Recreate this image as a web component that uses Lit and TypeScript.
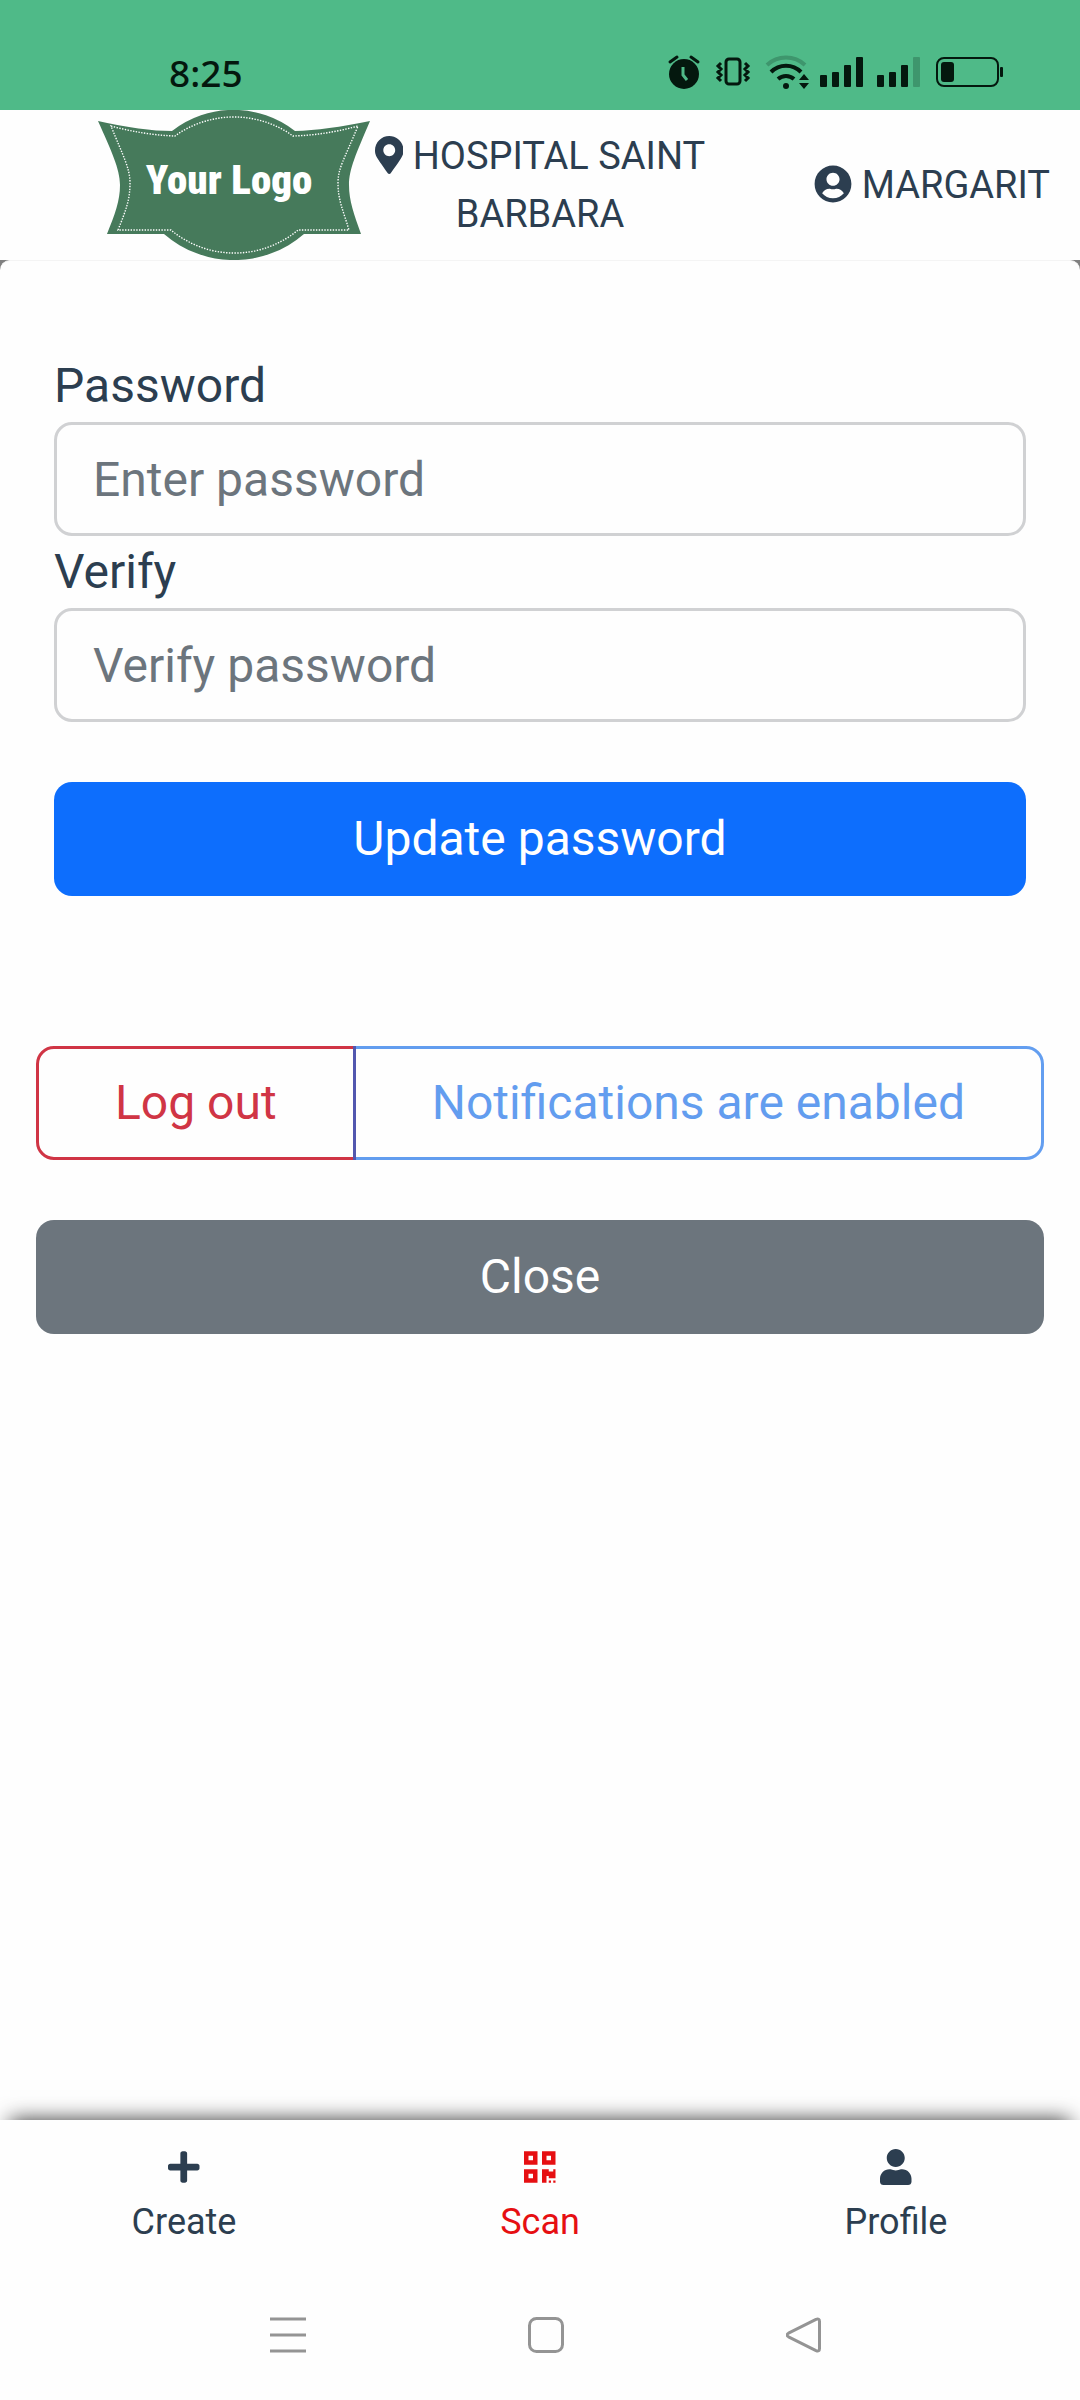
import { LitElement, html, css, svg } from "lit";
import { customElement, property } from "lit/decorators.js";

const ICONS = {
  pin: {
    width: 384,
    path: "M172.268 501.67C26.97 291.031 0 269.413 0 192 0 85.961 85.961 0 192 0s192 85.961 192 192c0 77.413-26.97 99.031-172.268 309.67-9.535 13.774-29.93 13.773-39.464 0zM192 272c44.183 0 80-35.817 80-80s-35.817-80-80-80-80 35.817-80 80 35.817 80 80 80z",
  },
  account: {
    width: 512,
    path: "M256 8C119 8 8 119 8 256s111 248 248 248 248-111 248-248S393 8 256 8zm0 96c48.6 0 88 39.4 88 88s-39.4 88-88 88-88-39.4-88-88 39.4-88 88-88zm0 344c-58.7 0-111.3-26.6-146.5-68.2 18.8-35.4 55.6-59.8 98.5-59.8 2.4 0 4.8.4 7.1 1.1 13 4.2 26.6 6.9 40.9 6.9 14.3 0 28-2.7 40.9-6.9 2.3-.7 4.7-1.1 7.1-1.1 42.9 0 79.7 24.4 98.5 59.8C367.3 421.4 314.7 448 256 448z",
  },
  plus: {
    width: 448,
    path: "M416 208H272V64c0-17.67-14.33-32-32-32h-32c-17.67 0-32 14.33-32 32v144H32c-17.67 0-32 14.33-32 32v32c0 17.67 14.33 32 32 32h144v144c0 17.67 14.33 32 32 32h32c17.67 0 32-14.33 32-32V304h144c17.67 0 32-14.33 32-32v-32c0-17.67-14.33-32-32-32z",
  },
  qrcode: {
    width: 448,
    path: "M0 224h192V32H0v192zM64 96h64v64H64V96zm192-64v192h192V32H256zm128 128h-64V96h64v64zM0 480h192V288H0v192zm64-128h64v64H64v-64zm352-64h32v128h-96v-32h-32v96h-64V288h96v32h64v-32zm0 160h32v32h-32v-32zm-64 0h32v32h-32v-32z",
  },
  user: {
    width: 448,
    path: "M224 256c70.7 0 128-57.3 128-128S294.7 0 224 0 96 57.3 96 128s57.3 128 128 128zm89.6 32h-16.7c-22.2 10.2-46.9 16-72.9 16s-50.6-5.8-72.9-16h-16.7C60.2 288 0 348.2 0 422.4V464c0 26.5 21.5 48 48 48h352c26.5 0 48-21.5 48-48v-41.6c0-74.2-60.2-134.4-134.4-134.4z",
  },
};

type IconName = keyof typeof ICONS;

/** Solid glyph, one em high, in the current text colour. */
@customElement("app-icon")
class AppIcon extends LitElement {
  @property() name: IconName = "plus";

  static styles = css`
    :host {
      display: inline-block;
      height: 1em;
      line-height: 1;
      vertical-align: -0.125em;
    }
    .glyph {
      display: block;
      height: 1em;
      fill: currentColor;
    }
  `;

  render() {
    const icon = ICONS[this.name];
    return html`<svg class="glyph" viewBox="0 0 ${icon.width} 512" aria-hidden="true">
      <path d=${icon.path}></path>
    </svg>`;
  }
}

/** Device status bar: clock, alarm, ringer, wireless, two SIMs, battery. */
@customElement("status-bar")
class StatusBar extends LitElement {
  static styles = css`
    :host {
      display: flex;
      align-items: center;
      justify-content: space-between;
      height: 110px;
      box-sizing: border-box;
      padding: 36px 77px 0 169px;
      background: #4fba88;
      color: #04180e;
    }
    .clock {
      font: 500 37px/40px "Noto Sans", Roboto, sans-serif;
    }
    .tray {
      display: flex;
      align-items: center;
      gap: 16px;
    }
    .tray svg {
      display: block;
      overflow: visible;
    }
  `;

  private bars(heights: number[], faded: number) {
    return heights.map(
      (h, i) =>
        svg`<rect x=${i * 12} y=${31 - h} width="7" height=${h} rx="1" fill="currentColor" opacity=${i >= faded ? 0.22 : 1}></rect>`
    );
  }

  render() {
    return html`
      <time class="clock">8:25</time>
      <div class="tray">
        <svg width="33" height="34" viewBox="0 0 33 34">
          <circle cx="16" cy="18" r="15" fill="currentColor"></circle>
          <path d="M2 6l7-5M30 6l-7-5" stroke="currentColor" stroke-width="3" stroke-linecap="round"></path>
          <path d="M15 11v8l4 5" fill="none" stroke="#4fba88" stroke-width="3"></path>
        </svg>
        <svg width="33" height="34" viewBox="0 0 33 34" fill="none" stroke="currentColor">
          <rect x="9" y="3" width="14" height="25" rx="3" stroke-width="3"></rect>
          <path d="M4 7L1 10l3 3-3 3 3 3-3 3 3 3M28 7l3 3-3 3 3 3-3 3 3 3-3 3" stroke-width="3"></path>
        </svg>
        <svg width="38" height="34" viewBox="0 0 38 34" fill="none" stroke="currentColor">
          <path d="M1 9a28 28 0 0 1 38 0" stroke-width="4" opacity=".22"></path>
          <path d="M5 16a21 21 0 0 1 30 0" stroke-width="4"></path>
          <path d="M12 23a12 12 0 0 1 16 0" stroke-width="4"></path>
          <circle cx="20" cy="30" r="3" fill="currentColor" stroke="none"></circle>
          <path d="M33 24l5-6 5 6zM33 27h10l-5 6z" fill="currentColor" stroke="none"></path>
        </svg>
        <svg width="41" height="34" viewBox="0 0 41 34">${this.bars([12, 15, 22, 30], 4)}</svg>
        <svg width="43" height="34" viewBox="0 0 43 34">${this.bars([12, 15, 22, 30], 3)}</svg>
        <svg width="67" height="34" viewBox="0 0 67 34">
          <rect x="1" y="2" width="61" height="28" rx="7" fill="none" stroke="currentColor" stroke-width="2"></rect>
          <rect x="5" y="6" width="13" height="20" rx="3" fill="currentColor"></rect>
          <rect x="64" y="11" width="3" height="10" rx="1" fill="currentColor"></rect>
        </svg>
      </div>
    `;
  }
}

/** Top bar with brand badge, current site and signed-in user. */
@customElement("site-header")
class SiteHeader extends LitElement {
  static styles = css`
    :host {
      display: grid;
      grid-template-columns: 12fr 11fr 12fr;
      align-items: center;
      background: #fefefe;
      color: #2c3e50;
      font-size: 38px;
      line-height: 58px;
    }
    .badge {
      display: block;
      justify-self: end;
      width: 272px;
      height: 150px;
    }
    .badge-name {
      font: 900 41px "Roboto Condensed", "Liberation Sans Narrow", Roboto, sans-serif;
      fill: #fff;
    }
    .site {
      text-align: center;
    }
    .account {
      justify-self: end;
      padding-right: 30px;
    }
  `;

  render() {
    return html`
      <svg class="badge" viewBox="0 0 272 150" role="img">
        <path
          fill="#467a5b"
          d="M0 11Q44 21 74 21A100 100 0 0 1 197 21Q228 20 272 11C258 44 251 59 251 75C251 91 256 104 263 124H206A107 107 0 0 1 66 124H9C17 104 22 91 22 75C22 59 13 40 0 11Z"
        ></path>
        <path
          fill="none"
          stroke="#fff"
          stroke-width="1.4"
          stroke-dasharray="1.4 1.4"
          d="M13 16Q46 25 77 26A101 101 0 0 1 195 26Q228 25 260 16C246 50 240 58 240 73C240 90 245 100 251 120H200A99 99 0 0 1 73 120H20C28 100 32 90 32 73C32 58 25 46 13 16Z"
        ></path>
        <text class="badge-name" x="131" y="84" text-anchor="middle">Your Logo</text>
      </svg>
      <div class="site"><app-icon name="pin"></app-icon> HOSPITAL SAINT BARBARA</div>
      <div class="account"><app-icon name="account"></app-icon> MARGARIT</div>
    `;
  }
}

/** Password form and session actions. */
@customElement("profile-panel")
class ProfilePanel extends LitElement {
  static styles = css`
    :host {
      display: block;
      padding: 89px 36px 0;
      color: #2c3e50;
      font-size: 48px;
      line-height: 72px;
    }
    .form {
      display: flex;
      flex-direction: column;
      padding: 0 18px;
      margin-bottom: 150px;
    }
    .input,
    .button {
      box-sizing: border-box;
      width: 100%;
      margin: 0;
      padding: 18px 36px;
      border: 3px solid transparent;
      border-radius: 18px;
      font: inherit;
      height: 114px;
    }
    .input {
      border-color: #d0d1d3;
      background: #fefefe;
      color: #212529;
    }
    .input::placeholder {
      color: #6c757d;
      opacity: 1;
    }
    .button {
      color: #fff;
      text-align: center;
      cursor: pointer;
    }
    .submit {
      margin-top: 60px;
      background: #0d6efd;
    }
    .group {
      display: flex;
      margin-bottom: 60px;
    }
    .group .button {
      flex: 1 1 auto;
      width: auto;
      background: transparent;
    }
    .group .logout {
      border-color: #d03545;
      border-radius: 18px 0 0 18px;
      color: #d03545;
    }
    .group .notify {
      margin-left: -3px;
      border-color: #106ae8;
      border-radius: 0 18px 18px 0;
      color: #106ae8;
      opacity: 0.65;
      cursor: default;
    }
    .close {
      background: #6c757d;
    }
  `;

  render() {
    return html`
      <form class="form" @submit=${(e: Event) => e.preventDefault()}>
        <label for="password">Password</label>
        <input class="input" id="password" type="password" placeholder="Enter password" autocomplete="new-password" />
        <label for="verify">Verify</label>
        <input class="input" id="verify" type="password" placeholder="Verify password" autocomplete="new-password" />
        <button class="button submit" type="submit">Update password</button>
      </form>
      <div class="group">
        <button class="button logout" type="button">Log out</button>
        <button class="button notify" type="button" disabled>Notifications are enabled</button>
      </div>
      <button class="button close" type="button">Close</button>
    `;
  }
}

/** Bottom tabs of the app. */
@customElement("tab-bar")
class TabBar extends LitElement {
  static styles = css`
    :host {
      display: block;
      position: relative;
      background: #fefefe;
      box-shadow: 0 -10px 20px -10px rgba(0, 0, 0, 0.8);
      font-size: 36px;
      line-height: 54px;
    }
    .tabs {
      display: grid;
      grid-template-columns: repeat(3, 1fr);
      padding: 20px 6px;
    }
    .tab {
      display: flex;
      flex-direction: column;
      align-items: center;
      color: #2c3e50;
      text-decoration: none;
    }
    .tab app-icon {
      margin: 9px 0 10px;
    }
    .active {
      color: #e60f12;
    }
  `;

  render() {
    return html`
      <nav class="tabs">
        <a class="tab" href="#create"><app-icon name="plus"></app-icon>Create</a>
        <a class="tab active" href="#scan"><app-icon name="qrcode"></app-icon>Scan</a>
        <a class="tab" href="#profile"><app-icon name="user"></app-icon>Profile</a>
      </nav>
    `;
  }
}

/** Device navigation keys. */
@customElement("system-keys")
class SystemKeys extends LitElement {
  static styles = css`
    :host {
      display: grid;
      position: relative;
      grid-template-columns: repeat(3, 1fr);
      padding: 0 147px 0 159px;
      height: 131px;
      box-sizing: border-box;
      background: #fefefe;
    }
    .key {
      display: grid;
      place-items: center;
      margin: 0;
      padding: 0;
      border: 0;
      background: none;
    }
    .key svg {
      fill: none;
      stroke: #949494;
      stroke-width: 3;
      stroke-linejoin: round;
    }
  `;

  render() {
    return html`
      <button class="key" type="button" aria-label="Recent apps">
        <svg width="36" height="36" viewBox="0 0 36 36"><path d="M0 2h36M0 18h36M0 34h36"></path></svg>
      </button>
      <button class="key" type="button" aria-label="Home">
        <svg width="36" height="36" viewBox="0 0 36 36"><rect x="1.5" y="1.5" width="33" height="33" rx="7"></rect></svg>
      </button>
      <button class="key" type="button" aria-label="Back">
        <svg width="36" height="36" viewBox="0 0 36 36">
          <path d="M2.500 16.200L30 2.400Q33.500 1 33.500 4.500V31.500Q33.500 35 30 33.600L2.500 19.800Q-.5 18 2.500 16.200Z"></path>
        </svg>
      </button>
    `;
  }
}

@customElement("app-root")
class AppRoot extends LitElement {
  static styles = css`
    :host {
      display: flex;
      flex-direction: column;
      min-height: 100vh;
      font-family: Roboto, sans-serif;
    }
    .backdrop {
      display: flex;
      flex: 1;
      background: #808080;
    }
    .sheet {
      flex: 1;
      border-top: 1px solid #f4f4f4;
      border-radius: 10px 10px 0 0;
      background: #fefefe;
    }
  `;

  render() {
    return html`
      <status-bar></status-bar>
      <site-header></site-header>
      <div class="backdrop">
        <main class="sheet"><profile-panel></profile-panel></main>
      </div>
      <tab-bar></tab-bar>
      <system-keys></system-keys>
    `;
  }
}
